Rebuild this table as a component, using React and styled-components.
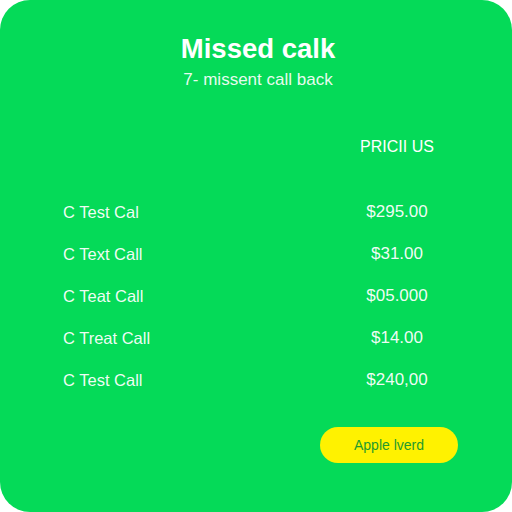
import React from 'react';
import styled, { createGlobalStyle } from 'styled-components';

const GlobalStyle = createGlobalStyle`
  html, body {
    margin: 0;
    padding: 0;
    background: #ffffff;
    font-family: "Liberation Sans", Arial, sans-serif;
  }
`;

const Card = styled.div`
  width: 512px;
  height: 512px;
  box-sizing: border-box;
  background: #05da58;
  border-radius: 30px;
  padding-top: 34px;
  display: flex;
  flex-direction: column;
  color: #ffffff;
`;

const Header = styled.header`
  display: flex;
  flex-direction: column;
  align-items: center;
  gap: 6px;
  padding-left: 4px;
`;

const Title = styled.h1`
  margin: 0;
  font-size: 27.5px;
  line-height: 30px;
  font-weight: 700;
`;

const Subtitle = styled.p`
  margin: 0;
  font-size: 17px;
  line-height: 20px;
  color: rgba(255, 255, 255, 0.92);
`;

const Table = styled.div`
  display: grid;
  grid-template-columns: 1fr 140px;
  padding: 0 45px 0 63px;
  margin-top: 47px;
`;

const ColumnHead = styled.div`
  grid-column: 2;
  text-align: center;
  font-size: 16px;
  line-height: 20px;
  margin-bottom: 34px;
`;

const Cell = styled.div`
  height: 42px;
  display: flex;
  align-items: center;
  font-size: ${p => (p.$price ? '17px' : '16.5px')};
  justify-content: ${p => (p.$price ? 'center' : 'flex-start')};
  color: rgba(255, 255, 255, 0.95);
`;

const Footer = styled.div`
  display: flex;
  justify-content: flex-end;
  padding-right: 54px;
  margin-top: 26px;
`;

const Button = styled.button`
  width: 138px;
  height: 36px;
  border: none;
  border-radius: 18px;
  background: #fff200;
  color: #1f9a2e;
  font-family: "Liberation Sans", Arial, sans-serif;
  font-size: 14px;
  cursor: pointer;
`;

const rows = [
  ['C Test Cal', '$295.00'],
  ['C Text Call', '$31.00'],
  ['C Teat Call', '$05.000'],
  ['C Treat Call', '$14.00'],
  ['C Test Call', '$240,00'],
];

export default function App() {
  return (
    <>
      <GlobalStyle />
      <Card>
        <Header>
          <Title>Missed calk</Title>
          <Subtitle>7- missent call back</Subtitle>
        </Header>
        <Table>
          <ColumnHead>PRICII US</ColumnHead>
          {rows.map(([name, price]) => (
            <React.Fragment key={name + price}>
              <Cell>{name}</Cell>
              <Cell $price>{price}</Cell>
            </React.Fragment>
          ))}
        </Table>
        <Footer>
          <Button>Apple lverd</Button>
        </Footer>
      </Card>
    </>
  );
}
